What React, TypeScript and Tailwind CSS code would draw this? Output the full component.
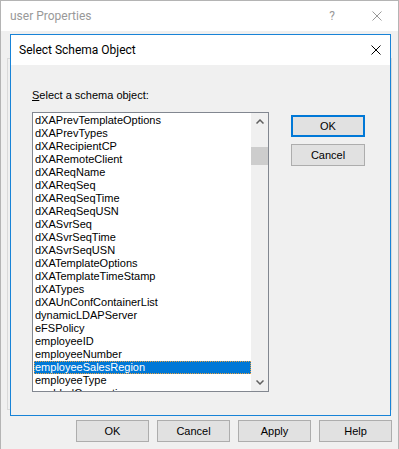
import React from "react";

const items = [
  "dXAPrevTemplateOptions",
  "dXAPrevTypes",
  "dXARecipientCP",
  "dXARemoteClient",
  "dXAReqName",
  "dXAReqSeq",
  "dXAReqSeqTime",
  "dXAReqSeqUSN",
  "dXASvrSeq",
  "dXASvrSeqTime",
  "dXASvrSeqUSN",
  "dXATemplateOptions",
  "dXATemplateTimeStamp",
  "dXATypes",
  "dXAUnConfContainerList",
  "dynamicLDAPServer",
  "eFSPolicy",
  "employeeID",
  "employeeNumber",
  "employeeSalesRegion",
  "employeeType",
  "enabledConnection",
];

const sys = { fontFamily: '"Liberation Sans", Arial, sans-serif' };
const ui = { fontFamily: 'Roboto, "Noto Sans", sans-serif' };

function XIcon({ color }: { color: string }) {
  return (
    <svg width="10" height="10" viewBox="0 0 10 10">
      <path d="M0.5 0.5 L9.5 9.5 M9.5 0.5 L0.5 9.5" stroke={color} strokeWidth="1" fill="none" />
    </svg>
  );
}

function Chevron({ up }: { up: boolean }) {
  return (
    <svg width="8" height="5" viewBox="0 0 8 5">
      <path
        d={up ? "M0.5 4.5 L4 1 L7.5 4.5" : "M0.5 0.5 L4 4 L7.5 0.5"}
        stroke="#606060"
        strokeWidth="1.5"
        fill="none"
      />
    </svg>
  );
}

function Btn({ label, focused }: { label: string; focused?: boolean }) {
  return (
    <div
      className={
        "flex items-center justify-center bg-[#e1e1e1] text-[11px] text-black " +
        (focused ? "border-2 border-[#0078d7]" : "border border-[#adadad]")
      }
      style={sys}
    >
      {label}
    </div>
  );
}

export default function App() {
  return (
    <div className="relative w-[399px] h-[449px] bg-[#f0f0f0] border-l border-t border-r border-[#b4b4b4] overflow-hidden">
      {/* Outer window title bar */}
      <div className="h-[30px] bg-white flex items-center pl-[9px] pr-[16px]" style={ui}>
        <span className="text-[12px] text-[#999999]">user Properties</span>
        <span className="ml-auto text-[12px] text-[#999999] mr-[37px]">?</span>
        <XIcon color="#999999" />
      </div>

      {/* Outer body */}
      <div className="px-[6px] pt-[27px]">
        <div className="h-[352px] border border-[#d9d9d9]" />
      </div>
      <div className="flex justify-end gap-[8px] pr-[6px] mt-[10px]">
        <div className="w-[73px] h-[22px] grid"><Btn label="OK" /></div>
        <div className="w-[73px] h-[22px] grid"><Btn label="Cancel" /></div>
        <div className="w-[73px] h-[22px] grid"><Btn label="Apply" /></div>
        <div className="w-[73px] h-[22px] grid"><Btn label="Help" /></div>
      </div>

      {/* Modal dialog */}
      <div className="absolute left-[9px] top-[33px] w-[381px] h-[382px] border border-[#1883d7] bg-[#f0f0f0] flex flex-col">
        <div className="h-[30px] bg-white flex items-center pl-[8px] pr-[9px]" style={ui}>
          <span className="text-[12px] text-black">Select Schema Object</span>
          <span className="ml-auto">
            <XIcon color="#000000" />
          </span>
        </div>
        <div className="flex-1 pl-[21px] pt-[24px]" style={sys}>
          <div className="text-[11px] leading-[13px] text-black">
            <span className="underline">S</span>elect a schema object:
          </div>
          <div className="flex mt-[10px]">
            <div className="w-[237px] h-[280px] border border-[#828790] bg-white flex">
              <div className="flex-1 overflow-hidden pt-[1px] pl-[1px]">
                {items.map((it) => {
                  const sel = it === "employeeSalesRegion";
                  return (
                    <div
                      key={it}
                      className={
                        "h-[13px] leading-[13px] text-[11px] pl-[1px] whitespace-nowrap " +
                        (sel
                          ? "bg-[#0078d7] text-white outline outline-1 outline-dotted outline-offset-[-1px] outline-[#e8a040]"
                          : "text-black")
                      }
                    >
                      {it}
                    </div>
                  );
                })}
              </div>
              <div className="w-[17px] bg-[#f0f0f0] flex flex-col">
                <div className="h-[17px] flex items-center justify-center">
                  <Chevron up />
                </div>
                <div className="flex-1">
                  <div className="mt-[17px] h-[18px] bg-[#cdcdcd]" />
                </div>
                <div className="h-[17px] flex items-center justify-center">
                  <Chevron up={false} />
                </div>
              </div>
            </div>
            <div className="ml-[22px] mt-[3px] flex flex-col gap-[7px]">
              <div className="w-[74px] h-[22px] grid">
                <Btn label="OK" focused />
              </div>
              <div className="w-[74px] h-[22px] grid">
                <Btn label="Cancel" />
              </div>
            </div>
          </div>
        </div>
      </div>
    </div>
  );
}
